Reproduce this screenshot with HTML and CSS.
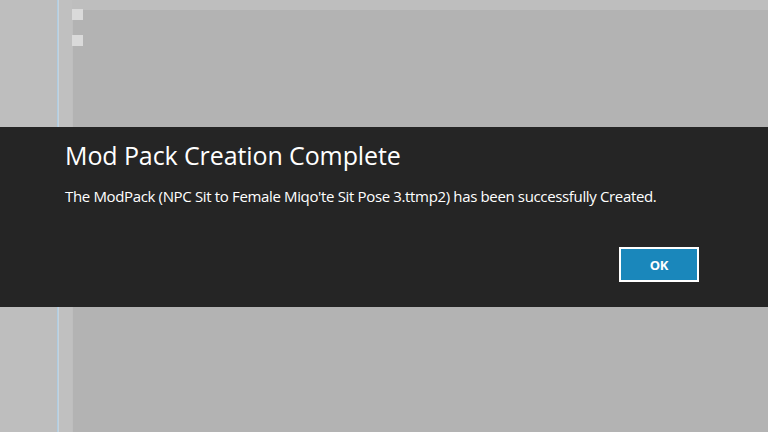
FILE: index.html
```html
<!DOCTYPE html>
<html lang="en">
<head>
    <meta charset="UTF-8">
    <meta name="viewport" content="width=device-width, initial-scale=1.0">
    <title>Mod Pack Creation Complete</title>
    <link rel="stylesheet" href="styles.css">
</head>
<body>
    <div class="workspace">
        <div class="sidebar"></div>
        <div class="divider"></div>
        <div class="gutter"></div>
        <div class="content">
            <div class="tabs">
                <span class="tab-box"></span>
                <span class="tab-box"></span>
            </div>
            <div class="panel"></div>
        </div>
    </div>

    <div class="dialog">
        <h1 class="dialog-title">Mod Pack Creation Complete</h1>
        <p class="dialog-message">The ModPack (NPC Sit to Female Miqo'te Sit Pose 3.ttmp2) has been successfully Created.</p>
        <div class="dialog-actions">
            <button class="ok-button">OK</button>
        </div>
    </div>
</body>
</html>
```

FILE: styles.css
```css
body {
    margin: 0;
    height: 432px;
    overflow: hidden;
    background-color: #bebebe;
    font-family: "Open Sans", "Noto Sans", sans-serif;
}

.workspace {
    display: flex;
    height: 432px;
}

.sidebar {
    width: 57px;
    flex-shrink: 0;
}

.divider {
    width: 2px;
    flex-shrink: 0;
    background-color: #b0cde2;
    border-right: 1px solid #c6d3dc;
    box-sizing: border-box;
}

.gutter {
    width: 13px;
    flex-shrink: 0;
    background-color: #c0c0c0;
}

.content {
    flex: 1;
    position: relative;
    padding-top: 10px;
    display: flex;
}

.tabs {
    position: absolute;
    left: 0;
    top: 9px;
    display: flex;
    flex-direction: column;
    gap: 15px;
}

.tab-box {
    width: 11px;
    height: 11px;
    background-color: #dadada;
}

.panel {
    flex: 1;
    margin-left: 1px;
    background-color: #b3b3b3;
}

.dialog {
    position: absolute;
    left: 0;
    right: 0;
    top: 127px;
    height: 180px;
    box-sizing: border-box;
    padding: 12px 69px 0 65px;
    background-color: #252525;
    color: #ffffff;
}

.dialog-title {
    margin: 0;
    font-size: 25px;
    font-weight: normal;
    line-height: 32px;
    letter-spacing: -0.1px;
}

.dialog-message {
    margin: 15px 0 0;
    font-size: 15px;
    line-height: 20px;
    letter-spacing: -0.35px;
}

.dialog-actions {
    display: flex;
    justify-content: flex-end;
    margin-top: 41px;
}

.ok-button {
    width: 80px;
    height: 35px;
    background-color: #1a87bb;
    color: #ffffff;
    border: 2px solid #ffffff;
    font-family: "Open Sans", "Noto Sans", sans-serif;
    font-weight: bold;
    font-size: 13px;
    letter-spacing: -0.3px;
}
```
